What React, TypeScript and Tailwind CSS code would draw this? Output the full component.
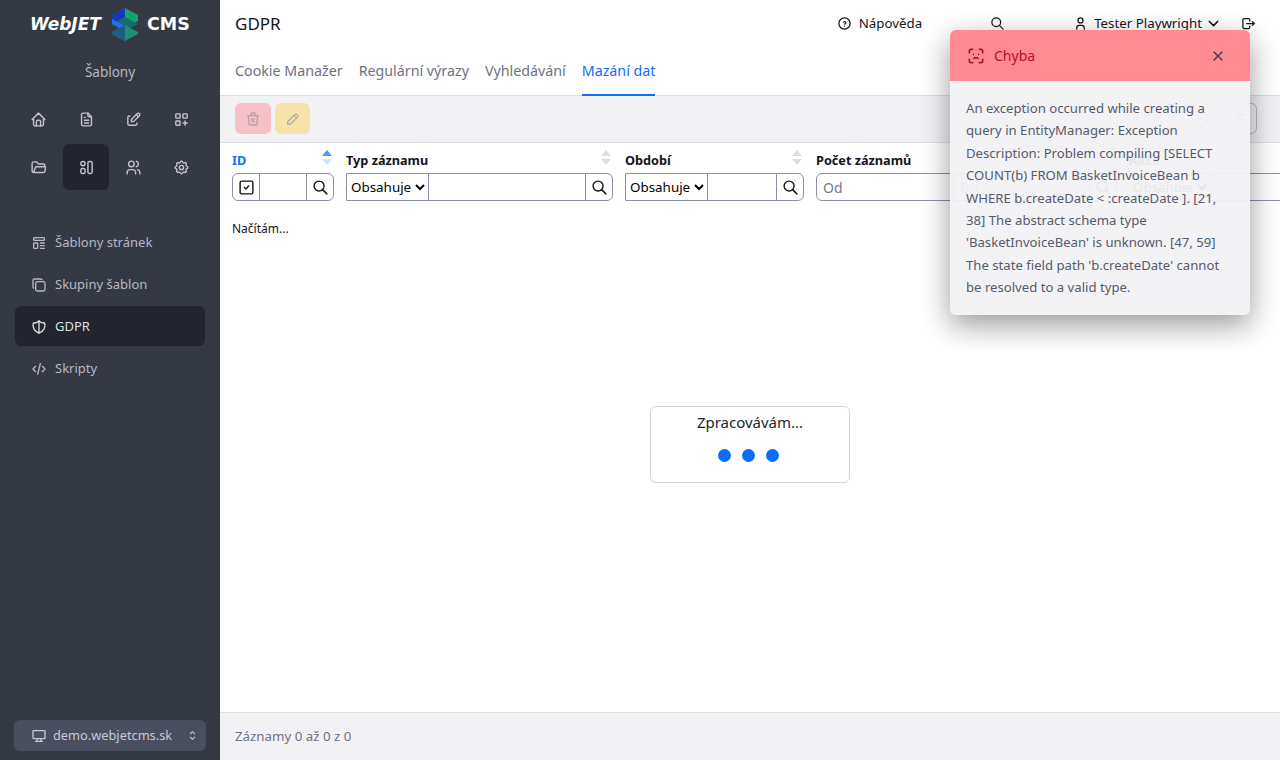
import React from 'react';
import {
  TbHome,
  TbFileText,
  TbEdit,
  TbLayoutGridAdd,
  TbFolderOpen,
  TbUsers,
  TbSettings,
  TbTemplate,
  TbCopy,
  TbShieldHalf,
  TbCode,
  TbDeviceDesktop,
  TbSelector,
  TbHelpCircle,
  TbSearch,
  TbUser,
  TbChevronDown,
  TbLogout,
  TbTrashX,
  TbPencil,
  TbFaceIdError,
  TbX,
  TbSquareCheck,
  TbDownload,
  TbRefresh,
  TbAdjustmentsHorizontal,
} from 'react-icons/tb';

const uiFont = { fontFamily: '"Noto Sans", sans-serif' };

// the "sablony" module icon, tabler has nothing with this exact shape
function TemplatesIcon({ size = 17 }: { size?: number }) {
  return (
    <svg width={size} height={size} viewBox="0 0 24 24" fill="none" stroke="currentColor" strokeWidth="2" strokeLinecap="round" strokeLinejoin="round">
      <circle cx="7" cy="6.5" r="3" />
      <rect x="4" y="13.5" width="6" height="7" rx="2" />
      <rect x="14" y="3.5" width="6" height="17" rx="2" />
    </svg>
  );
}

function SortArrows({ active = false }: { active?: boolean }) {
  return (
    <span className="flex flex-col gap-[3px] mr-[2px] mt-[2px] self-start">
      <span className={`w-0 h-0 border-x-[5px] border-x-transparent border-b-[6px] ${active ? 'border-b-[#4d94ff]' : 'border-b-[#dcdde3]'}`} />
      <span className={`w-0 h-0 border-x-[5px] border-x-transparent border-t-[6px] ${active ? 'border-t-[#cfe2ff]' : 'border-t-[#dcdde3]'}`} />
    </span>
  );
}

function SearchButton() {
  return (
    <span className="w-[27px] shrink-0 flex items-center justify-center border-l border-[#8b90a8] text-[#13151b]">
      <TbSearch size={17} />
    </span>
  );
}

function ColumnHead({ label, width, active = false }: { label: string; width: string; active?: boolean }) {
  return (
    <div className={`${width} shrink-0 flex items-center justify-between h-[25px]`}>
      <span className={`text-[12.7px] font-bold ${active ? 'text-[#0d6efd]' : 'text-[#13151b]'}`}>{label}</span>
      <SortArrows active={active} />
    </div>
  );
}

function ContainsSelect() {
  return (
    <select
      defaultValue="Obsahuje"
      className="h-full w-[82px] shrink-0 bg-white text-[13.4px] text-black pl-0 pr-0 outline-none border-r border-[#8b90a8] appearance-auto"
      style={{ fontFamily: '"Noto Sans", sans-serif' }}
    >
      <option>Obsahuje</option>
    </select>
  );
}

export default function App() {
  const topIcons = [TbHome, TbFileText, TbEdit, TbLayoutGridAdd, TbFolderOpen, TemplatesIcon, TbUsers, TbSettings];
  const menu = [
    { label: 'Šablony stránek', icon: TbTemplate },
    { label: 'Skupiny šablon', icon: TbCopy },
    { label: 'GDPR', icon: TbShieldHalf, active: true },
    { label: 'Skripty', icon: TbCode },
  ];

  return (
    <div className="relative flex h-[760px] w-[1280px] overflow-hidden bg-white" style={uiFont}>
      {/* Sidebar */}
      <aside className="w-[220px] shrink-0 bg-[#353944] flex flex-col px-[15px]">
        <div className="h-[48px] flex items-center justify-center text-white" style={{ fontFamily: '"DejaVu Sans", sans-serif' }}>
          <span className="w-[73px] pt-[1px] text-[17px] leading-none font-bold italic whitespace-nowrap">WebJET</span>
          <svg width="28" height="33" viewBox="0 0 28 33" className="ml-[8px] mr-[8px]">
            <path d="M14 0 L27 7 L27 13 L14 20 L1 13 L1 7 Z" fill="#13a36f" />
            <path d="M14 0 L1 7 L1 13 L14 20 Z" fill="#1338b8" />
            <path d="M14 9 L27 16 L14 23 L1 16 Z" fill="#176b6c" />
            <path d="M1 11 L14 18 L14 23 L1 16 Z" fill="#1f6ff0" />
            <path d="M14 17 L27 24 L27 26 L14 33 L1 26 L1 24 Z" fill="#1f8f78" />
            <path d="M14 17 L1 24 L1 26 L14 33 Z" fill="#1c5f86" />
          </svg>
          <span className="w-[43px] pt-[1px] text-[17.5px] leading-none font-bold whitespace-nowrap">CMS</span>
        </div>
        <div className="mt-[15px] text-center text-[13.5px] text-[#b4b8c4] leading-[18px]">Šablony</div>
        <div className="mt-[15px] grid grid-cols-4 gap-y-[2px]">
          {topIcons.map((Icon, i) => (
            <div
              key={i}
              className={`h-[46px] w-[46px] mx-auto flex items-center justify-center rounded-[6px] text-[#c0c3cd] ${i === 5 ? 'bg-[#22252e]' : ''}`}
            >
              <Icon size={17} />
            </div>
          ))}
        </div>
        <nav className="mt-[32px] flex flex-col">
          {menu.map((item) => (
            <div
              key={item.label}
              className={`h-[40px] mb-[2px] pt-[1px] flex items-center gap-[8px] pl-[16px] rounded-[6px] text-[13px] ${item.active ? 'bg-[#22252e] text-[#dcdee5]' : 'text-[#b4b8c4]'}`}
            >
              <item.icon size={16} />
              <span>{item.label}</span>
            </div>
          ))}
        </nav>
        <div className="mt-auto mb-[9px] mx-[-1px] h-[31px] bg-[#4a4f5f] rounded-[6px] flex items-center pl-[17px] pr-[7px] text-[12.8px] text-[#c6c9d3]">
          <TbDeviceDesktop size={16} />
          <span className="ml-[6px]">demo.webjetcms.sk</span>
          <TbSelector size={13} className="ml-auto" />
        </div>
      </aside>

      {/* Main */}
      <main className="flex-1 min-w-0 flex flex-col">
        <header className="h-[96px] shrink-0 border-b border-[#dddee6] flex flex-col">
          <div className="h-[47px] flex items-center pl-[15px] pr-[24px] text-[13.3px] text-[#13151b]">
            <h1 className="text-[17px] leading-none">GDPR</h1>
            <div className="ml-auto flex items-center">
              <TbHelpCircle size={15} />
              <span className="ml-[7px]">Nápověda</span>
              <TbSearch size={15} className="ml-[68px]" />
              <TbUser size={15} className="ml-[68px]" />
              <span className="ml-[6px]">Tester Playwright</span>
              <TbChevronDown size={17} className="ml-[3px]" />
              <TbLogout size={15} className="ml-[19px]" />
            </div>
          </div>
          <div className="flex-1 flex items-stretch gap-[16px] pl-[15px] text-[14.25px] text-[#6d7183]">
            <span className="pt-[13px]">Cookie Manažer</span>
            <span className="pt-[13px]">Regulární výrazy</span>
            <span className="pt-[13px]">Vyhledávání</span>
            <span className="pt-[13px] text-[#0d6efd] border-b-2 border-[#0d6efd] mb-[-1px]">Mazání dat</span>
          </div>
        </header>

        <div className="h-[47px] shrink-0 bg-[#f2f2f5] border-b border-[#dddee6] flex items-start pt-[7px] pl-[15px] pr-[23px] gap-[4px]">
          <span className="w-[36px] h-[31px] rounded-[6px] bg-[#f7bfc6] flex items-center justify-center text-[#b3a3a8]">
            <TbTrashX size={16} />
          </span>
          <span className="w-[35px] h-[31px] rounded-[6px] bg-[#f5e3ab] flex items-center justify-center text-[#b5b0a0]">
            <TbPencil size={16} />
          </span>
          <span className="ml-auto w-[36px] h-[31px] rounded-[6px] border border-[#d3d4dc] flex items-center justify-center text-[#a9abb6]">
            <TbDownload size={16} />
          </span>
          <span className="ml-[9px] w-[30px] h-[31px] rounded-[6px] border border-[#d3d4dc] flex items-center justify-center text-[#a9abb6]">
            <TbRefresh size={16} />
          </span>
          <span className="ml-[1px] w-[35px] h-[31px] rounded-[6px] border border-[#b9bbc6] flex items-center justify-center text-[#a9abb6]">
            <TbAdjustmentsHorizontal size={16} />
          </span>
        </div>

        <div className="flex-1 min-h-0 pl-[12px] overflow-hidden">
          <div className="flex gap-[12px] mt-[5px] w-[1100px]">
            <ColumnHead label="ID" width="w-[102px]" active />
            <ColumnHead label="Typ záznamu" width="w-[267px]" />
            <ColumnHead label="Období" width="w-[179px]" />
            <ColumnHead label="Počet záznamů" width="w-[301px]" />
            <ColumnHead label="Akce" width="w-[83px]" />
          </div>
          <div className="flex gap-[12px] h-[28px] w-[1100px] text-[14px]">
            <div className="w-[102px] shrink-0 flex border border-[#8b90a8] rounded-[6px] overflow-hidden">
              <span className="w-[27px] shrink-0 flex items-center justify-center border-r border-[#8b90a8] text-[#13151b]">
                <TbSquareCheck size={17} />
              </span>
              <span className="flex-1" />
              <SearchButton />
            </div>
            <div className="w-[267px] shrink-0 flex border border-[#8b90a8] rounded-[6px] rounded-l-none overflow-hidden">
              <ContainsSelect />
              <span className="flex-1" />
              <SearchButton />
            </div>
            <div className="w-[179px] shrink-0 flex border border-[#8b90a8] rounded-[6px] rounded-l-none overflow-hidden">
              <ContainsSelect />
              <span className="flex-1" />
              <SearchButton />
            </div>
            <div className="w-[301px] shrink-0 flex border border-[#8b90a8] rounded-[6px] overflow-hidden text-[#767a8c]">
              <span className="w-[137px] pl-[6px] flex items-center border-r border-[#8b90a8]">Od</span>
              <span className="flex-1 pl-[6px] flex items-center">Do</span>
              <SearchButton />
            </div>
            <div className="flex border-y border-[#8b90a8] flex-1">
              <ContainsSelect />
            </div>
          </div>
          <p className="mt-[19px] text-[12px] leading-[18px] text-[#13151b]">Načítám...</p>
        </div>

        <footer className="h-[48px] shrink-0 bg-[#f2f2f5] border-t border-[#dddee6] pl-[15px] flex items-center text-[13.3px] text-[#6d7183]">
          Záznamy 0 až 0 z 0
        </footer>
      </main>

      {/* Processing overlay */}
      <div className="absolute left-[650px] top-[406px] w-[200px] h-[77px] bg-white border border-[#d2d2d2] rounded-[6px] flex flex-col items-center">
        <span className="mt-[4px] text-[15px] leading-[22px] text-[#212529]">Zpracovávám...</span>
        <div className="mt-[16px] ml-[-3px] flex gap-[11px]">
          <span className="w-[13px] h-[13px] rounded-full bg-[#0d6efd]" />
          <span className="w-[13px] h-[13px] rounded-full bg-[#0d6efd]" />
          <span className="w-[13px] h-[13px] rounded-full bg-[#0d6efd]" />
        </div>
      </div>

      {/* Error toast */}
      <div className="absolute right-0 top-0 w-[360px] h-[351px] overflow-hidden">
        <div className="absolute left-[30px] top-[30px] w-[300px] rounded-[6px] overflow-hidden bg-[#f2f2f5]/95 shadow-[0_10px_30px_rgba(0,0,0,0.4)]">
          <div className="h-[51px] bg-[#ff8a91] flex items-center pl-[16px] pr-[24px] text-[#b5102a]">
            <TbFaceIdError size={20} />
            <span className="ml-[8px] text-[14px]">Chyba</span>
            <TbX size={16} className="ml-auto text-[#3c3f4a]" />
          </div>
          <p className="px-[16px] pt-[16px] pb-[16px] text-[13.15px] leading-[22.4px] text-[#565a6a]">
            An exception occurred while creating a query in EntityManager: Exception Description: Problem compiling [SELECT COUNT(b) FROM BasketInvoiceBean b WHERE b.createDate &lt; :createDate ]. [21, 38] The abstract schema type 'BasketInvoiceBean' is unknown. [47, 59] The state field path 'b.createDate' cannot be resolved to a valid type.
          </p>
        </div>
      </div>
    </div>
  );
}
